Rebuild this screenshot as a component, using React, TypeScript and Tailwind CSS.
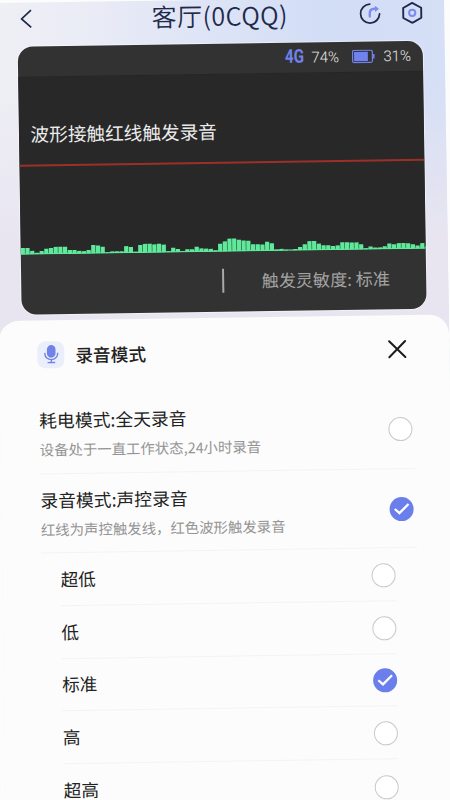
import clsx from 'clsx'

const wave = [
    20, 20, 11, 5, 10, 17, 19, 22, 22, 22, 12, 12, 9, 8, 11, 26, 24, 20, 3, 6, 6, 6, 21, 18, 4, 24, 27, 27, 25,
    27, 24, 4, 14, 10, 3, 9, 9, 16, 11, 10, 9, 5, 24, 31, 39, 39, 35, 33, 32, 21, 21, 20, 28, 23, 4, 6, 3, 1, 5,
    11, 19, 28, 28, 20, 15, 15, 12, 14, 23, 23, 22, 22, 16, 4, 9, 6, 6, 9, 17, 15, 18, 18, 17, 14, 10, 17, 9,
]

const modes = [
    { title: '耗电模式:全天录音', note: '设备处于一直工作状态,24小时录音', checked: false },
    { title: '录音模式:声控录音', note: '红线为声控触发线，红色波形触发录音', checked: true },
]

const levels = ['超低', '低', '标准', '高', '超高']

const Radio = ({ checked }: { checked: boolean }) => (
    <span
        className={clsx(
            'mt-[2px] flex size-6 shrink-0 items-center justify-center rounded-full',
            checked ? 'bg-[#6b7fec]' : 'border border-[#c9c9c9] bg-white'
        )}
    >
        {checked && (
            <svg viewBox="0 0 24 24" className="size-6" fill="none" stroke="#fff" strokeWidth="2.3">
                <path d="M5.2 11.8 9.8 16 19 7" />
            </svg>
        )}
    </span>
)

const Header = () => (
    <header className="mb-3 flex h-8 items-center text-[#1f2a4a]">
        <div className="flex flex-1 pl-[26px]">
            <svg viewBox="0 0 12 20" className="h-5 w-3" fill="none" stroke="currentColor" strokeWidth="1.7">
                <path d="M10.8 1.5 1.3 10.2 10.8 18.8" />
            </svg>
        </div>
        <h1 className="mr-[4px] -mt-[3px] text-[25px] leading-7 font-[350] tracking-[0.5px]">客厅(0CQQ)</h1>
        <div className="flex flex-1 justify-end gap-5 pr-[21px]">
            <svg viewBox="0 0 22 22" className="size-[22px]" fill="none" strokeLinecap="round">
                <path d="M10.6 1.6A9.5 9.5 0 1 0 20.3 11.6" stroke="#1f2a4a" strokeWidth="1.8" />
                <path d="M10.5 14V11Q10.5 6.3 15 6.3H17" stroke="#7b8bef" strokeWidth="2.3" />
                <path d="M15.8 3.2 19.8 6.3 15.8 9.6Z" fill="#7b8bef" />
            </svg>
            <svg viewBox="0 0 22 22" className="size-[22px]" fill="none" strokeLinejoin="round">
                <path d="M11 1 20 6V16L11 21 2 16V6Z" stroke="#1f2a4a" strokeWidth="1.9" />
                <circle cx="11" cy="11" r="3.1" stroke="#7b8bef" strokeWidth="2" />
            </svg>
        </div>
    </header>
)

const Monitor = () => (
    <section className="mx-auto flex h-[268px] w-[405px] flex-col overflow-hidden rounded-[15px] bg-[#323232] shadow-[0_0_0_1px_rgba(255,255,255,0.45)]">
        <div className="flex h-[31px] items-center border-b border-[#262626] pl-[267px] font-[Roboto] text-[15px] font-light text-[#e6e6e6]">
            <span className="w-[27px]">
                <b className="inline-block origin-left scale-x-[0.8] text-[19px] leading-none font-bold text-[#7082ee]">
                    4G
                </b>
            </span>
            <span className="w-[40px]">74%</span>
            <svg viewBox="0 0 23 14" className="mr-[9px] h-[14px] w-[23px]" fill="none">
                <rect x="0.7" y="0.7" width="19.8" height="12.2" rx="1.5" stroke="#7082ee" strokeWidth="1.2" />
                <rect x="2.2" y="2.2" width="13.8" height="9.2" fill="#7082ee" />
                <path d="M22 4.6V9" stroke="#7082ee" strokeWidth="1.6" />
            </svg>
            <span>31%</span>
        </div>

        <div className="flex h-[177px] flex-col bg-[#282828]">
            <p className="h-[89px] border-b-2 border-[#9c3029] pt-[43px] pl-[12px] text-[18.65px] leading-[26px] text-[#ececec]">
                波形接触红线触发录音
            </p>
            <div className="flex flex-1 items-end">
                <svg viewBox="0 0 405 16" className="h-4 w-[405px]" fill="#5fe99b">
                    <rect x="0" y="14.8" width="405" height="1.2" />
                    {wave.map((h, i) => (
                        <rect key={i} x={i * 4.7} y={16 - h / 3} width="4.2" height={h / 3} />
                    ))}
                </svg>
            </div>
        </div>

        <div className="flex h-[60px] items-center pl-[201px] text-[17.1px] text-[#a3a3a3]">
            <span className="mr-[38px] -mt-[3px] h-6 w-[2px] bg-[#a8a8a8]" />
            <span className="-mt-[2px] whitespace-pre">触发灵敏度: 标准</span>
        </div>
    </section>
)

const Sheet = () => (
    <section className="mt-[6px] h-[500px] rounded-t-[20px] bg-[#fcfcfc] text-[#222]">
        <div className="mb-[6px] flex h-[68px] items-center pr-[43px] pl-[38px]">
            <span className="flex size-[27px] items-center justify-center rounded-lg bg-[#ebeefb]">
                <svg viewBox="0 0 16 20" className="h-5 w-4" fill="none" stroke="#7183e6" strokeWidth="1.4">
                    <rect x="3.7" y="0.8" width="8.6" height="12.6" rx="4.3" fill="#7183e6" stroke="none" />
                    <path d="M1.6 8.5V9.5A6.4 5.8 0 0 0 14.4 9.5V8.5M8 15.2V18.2M4.2 18.3H11.8" />
                </svg>
            </span>
            <h2 className="ml-[11px] flex-1 text-[17.7px] font-medium">录音模式</h2>
            <svg viewBox="0 0 20 20" className="-mr-px size-[20px]" stroke="#1c1c1c" strokeWidth="2" strokeLinecap="round">
                <path d="M2 2 18 18M18 2 2 18" />
            </svg>
        </div>

        {modes.map((mode) => (
            <div
                key={mode.title}
                className="mr-[35px] ml-[39px] flex h-[79.5px] items-center justify-between border-b border-[#f3f3f3] pr-[3px]"
            >
                <div className="pt-[2px]">
                    <h3 className="text-[17.8px] leading-[29px]">{mode.title}</h3>
                    <p className="text-[14.4px] leading-[29px] text-[#949494]">{mode.note}</p>
                </div>
                <Radio checked={mode.checked} />
            </div>
        ))}

        <ul className="mr-[57px] ml-[58px]">
            {levels.map((level) => (
                <li
                    key={level}
                    className="flex h-[52.8px] items-center justify-between border-b border-[#f3f3f3] text-[17.6px] last:border-0"
                >
                    <span>{level}</span>
                    <Radio checked={level === '标准'} />
                </li>
            ))}
        </ul>
    </section>
)

const App = () => {
    return (
        <div className="h-[800px] w-[450px] overflow-hidden bg-[#fcfcfc]">
            <main className="mt-[3px] -ml-[6px] h-[800px] w-[450px] origin-[6px_-3px] -rotate-[0.85deg] bg-[linear-gradient(to_bottom,transparent_0,transparent_80px,#e8e5f0_240px,#e8e5f0_345px,#fcfcfc_345px),linear-gradient(to_right,#efeff5_0,#eaecf6_90px,#dfe5f6_200px,#d2ddf6_330px,#d5dff6_450px)] font-['Noto_Sans_CJK_SC',sans-serif]">
                <Header />
                <Monitor />
                <Sheet />
            </main>
        </div>
    )
}

export default App
